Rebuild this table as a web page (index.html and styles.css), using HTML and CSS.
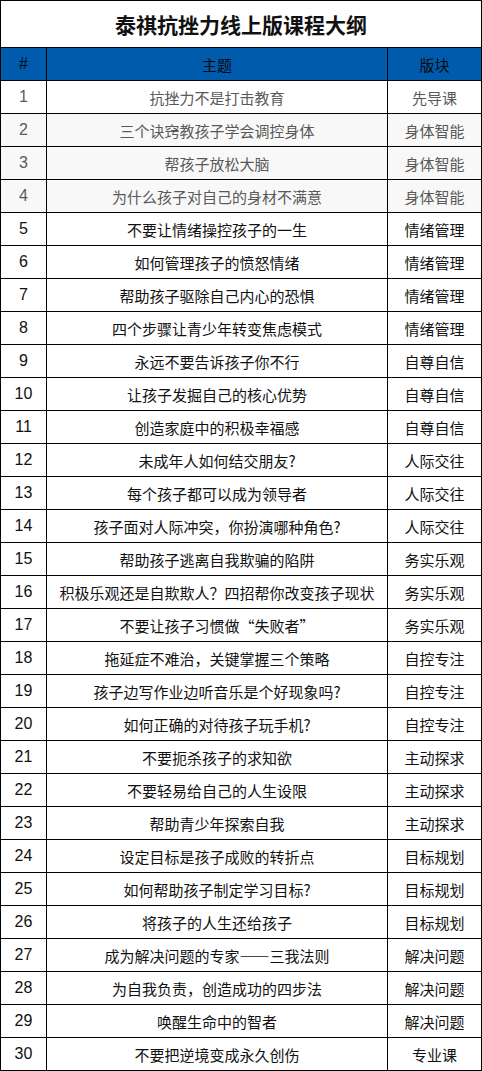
FILE: index.html
```html
<!DOCTYPE html>
<html lang="zh-CN">
<head>
<meta charset="utf-8">
<title>泰祺抗挫力线上版课程大纲</title>
<link rel="stylesheet" href="styles.css">
</head>
<body>
<div class="sheet">
  <div class="title">泰祺抗挫力线上版课程大纲</div>
  <div class="hd num">#</div>
  <div class="hd">主题</div>
  <div class="hd">版块</div>

  <div class="c num muted">1</div><div class="c muted">抗挫力不是打击教育</div><div class="c muted">先导课</div>
  <div class="c num muted shade">2</div><div class="c muted shade">三个诀窍教孩子学会调控身体</div><div class="c muted shade">身体智能</div>
  <div class="c num muted shade">3</div><div class="c muted shade">帮孩子放松大脑</div><div class="c muted shade">身体智能</div>
  <div class="c num muted shade">4</div><div class="c muted shade">为什么孩子对自己的身材不满意</div><div class="c muted shade">身体智能</div>
  <div class="c num">5</div><div class="c">不要让情绪操控孩子的一生</div><div class="c">情绪管理</div>
  <div class="c num">6</div><div class="c">如何管理孩子的愤怒情绪</div><div class="c">情绪管理</div>
  <div class="c num">7</div><div class="c">帮助孩子驱除自己内心的恐惧</div><div class="c">情绪管理</div>
  <div class="c num">8</div><div class="c">四个步骤让青少年转变焦虑模式</div><div class="c">情绪管理</div>
  <div class="c num">9</div><div class="c">永远不要告诉孩子你不行</div><div class="c">自尊自信</div>
  <div class="c num">10</div><div class="c">让孩子发掘自己的核心优势</div><div class="c">自尊自信</div>
  <div class="c num">11</div><div class="c">创造家庭中的积极幸福感</div><div class="c">自尊自信</div>
  <div class="c num">12</div><div class="c">未成年人如何结交朋友?</div><div class="c">人际交往</div>
  <div class="c num">13</div><div class="c">每个孩子都可以成为领导者</div><div class="c">人际交往</div>
  <div class="c num">14</div><div class="c">孩子面对人际冲突，你扮演哪种角色?</div><div class="c">人际交往</div>
  <div class="c num">15</div><div class="c">帮助孩子逃离自我欺骗的陷阱</div><div class="c">务实乐观</div>
  <div class="c num">16</div><div class="c">积极乐观还是自欺欺人？四招帮你改变孩子现状</div><div class="c">务实乐观</div>
  <div class="c num">17</div><div class="c">不要让孩子习惯做“失败者”</div><div class="c">务实乐观</div>
  <div class="c num">18</div><div class="c">拖延症不难治，关键掌握三个策略</div><div class="c">自控专注</div>
  <div class="c num">19</div><div class="c">孩子边写作业边听音乐是个好现象吗?</div><div class="c">自控专注</div>
  <div class="c num">20</div><div class="c">如何正确的对待孩子玩手机?</div><div class="c">自控专注</div>
  <div class="c num">21</div><div class="c">不要扼杀孩子的求知欲</div><div class="c">主动探求</div>
  <div class="c num">22</div><div class="c">不要轻易给自己的人生设限</div><div class="c">主动探求</div>
  <div class="c num">23</div><div class="c">帮助青少年探索自我</div><div class="c">主动探求</div>
  <div class="c num">24</div><div class="c">设定目标是孩子成败的转折点</div><div class="c">目标规划</div>
  <div class="c num">25</div><div class="c">如何帮助孩子制定学习目标?</div><div class="c">目标规划</div>
  <div class="c num">26</div><div class="c">将孩子的人生还给孩子</div><div class="c">目标规划</div>
  <div class="c num">27</div><div class="c">成为解决问题的专家——三我法则</div><div class="c">解决问题</div>
  <div class="c num">28</div><div class="c">为自我负责，创造成功的四步法</div><div class="c">解决问题</div>
  <div class="c num">29</div><div class="c">唤醒生命中的智者</div><div class="c">解决问题</div>
  <div class="c num">30</div><div class="c">不要把逆境变成永久创伤</div><div class="c">专业课</div>
</div>
</body>
</html>
```

FILE: styles.css
```css
html, body {
  margin: 0;
  padding: 0;
  background: #ffffff;
}

.sheet {
  width: 482px;
  box-sizing: border-box;
  display: grid;
  grid-template-columns: 45px 340px 93px;
  grid-template-rows: 46px;
  grid-auto-rows: 32px;
  gap: 1px;
  padding: 1px;
  background: #000000;
  font-family: "Noto Sans CJK SC", "Liberation Sans", sans-serif;
  font-size: 15px;
  color: #111111;
}

.title {
  grid-column: 1 / 4;
  display: flex;
  align-items: center;
  justify-content: center;
  background: #ffffff;
  font-size: 21px;
  font-weight: 700;
  color: #111111;
}

.hd {
  display: flex;
  align-items: center;
  justify-content: center;
  background: #005bac;
  color: #0a0a0a;
  font-size: 15px;
}

.c {
  display: flex;
  align-items: center;
  justify-content: center;
  background: #ffffff;
  white-space: nowrap;
}

.num {
  font-family: "Liberation Sans", "Noto Sans CJK SC", sans-serif;
  font-size: 16px;
}

.muted {
  color: #595959;
}

.shade {
  background: #f8f8f8;
}
```
